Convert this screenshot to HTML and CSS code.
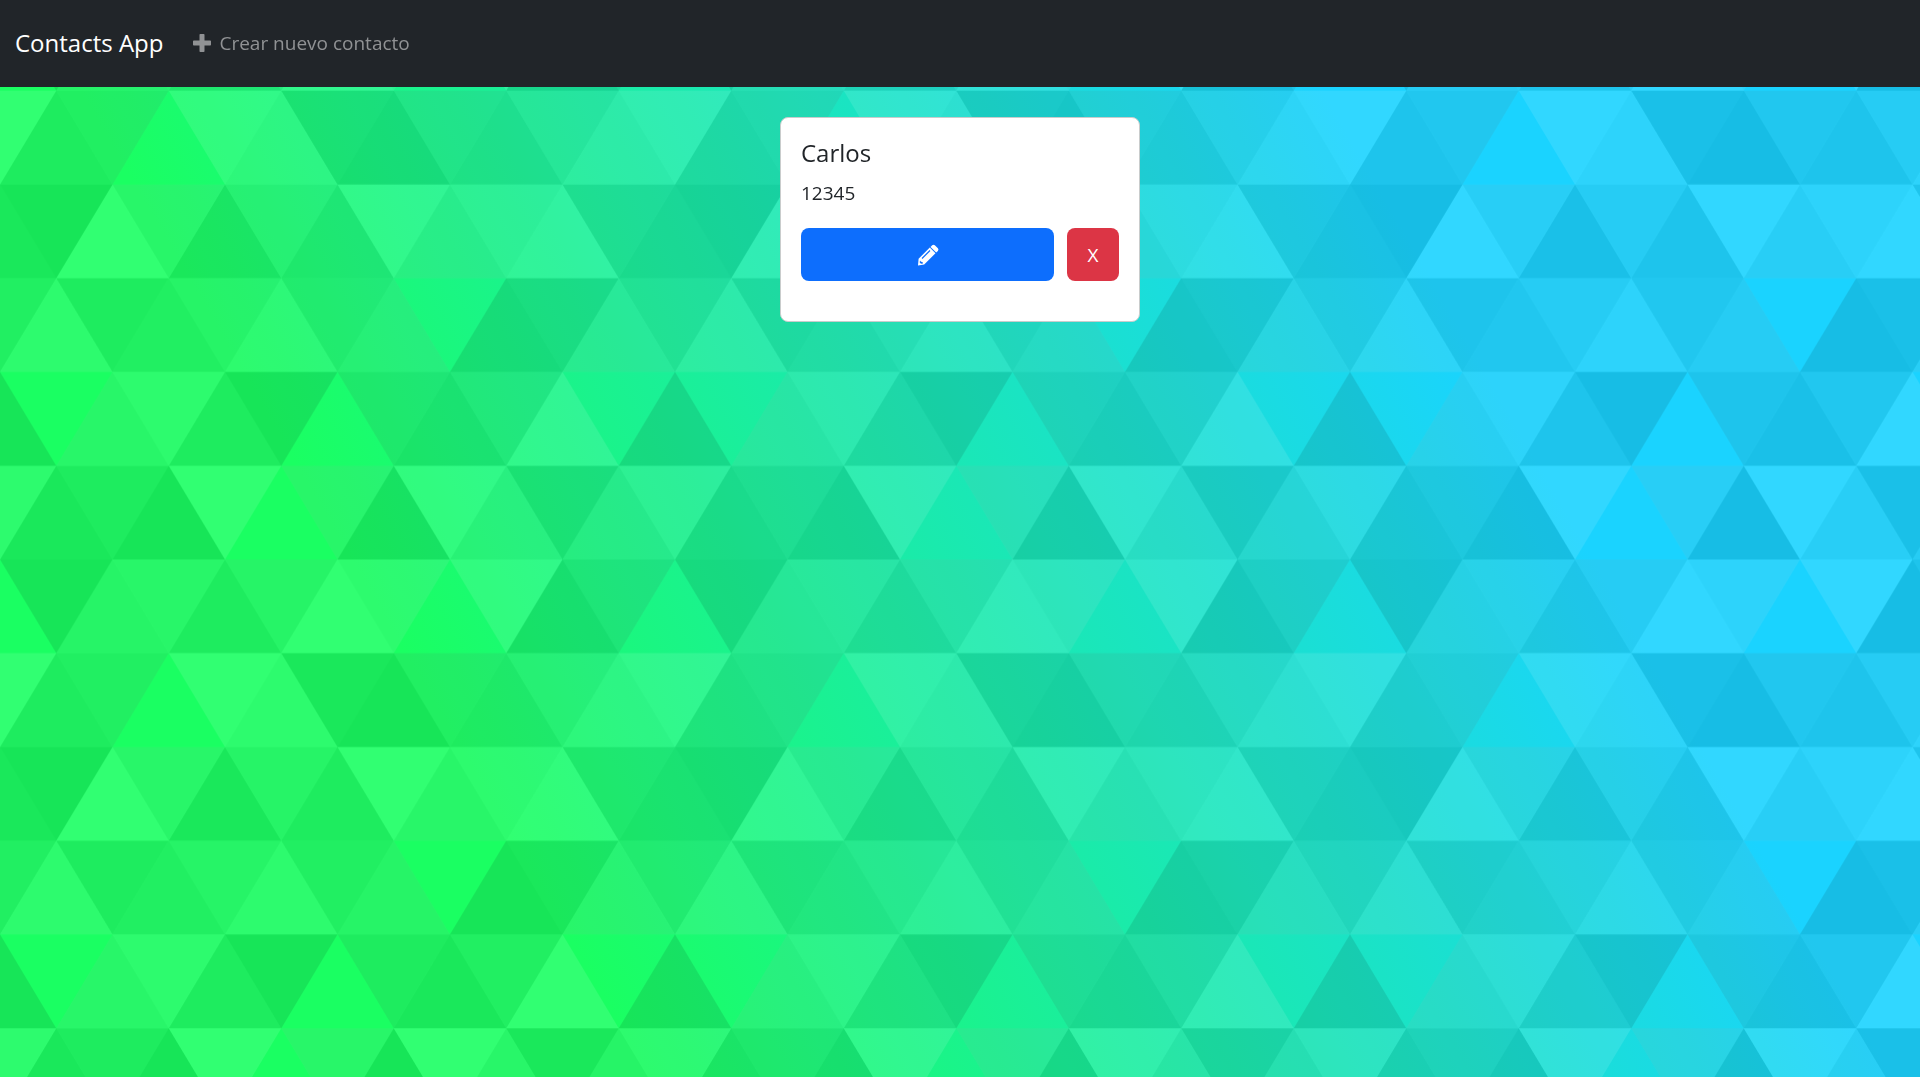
FILE: index.html
```html
<!DOCTYPE html>
<html lang="es">
<head>
<meta charset="utf-8">
<meta name="viewport" content="width=device-width, initial-scale=1">
<title>Contacts App</title>
<link rel="stylesheet" href="styles.css">
</head>
<body>
<svg class="backdrop" aria-hidden="true">
  <defs>
    <pattern id="triangles" width="1080" height="900" patternUnits="userSpaceOnUse" patternTransform="translate(0 -3) scale(.625)">
      <g fill-opacity=".1">
        <polygon fill="#444" points="90 150 0 300 180 300"/><polygon points="90 150 180 0 0 0"/><polygon fill="#AAA" points="270 150 360 0 180 0"/><polygon fill="#DDD" points="450 150 360 300 540 300"/><polygon fill="#999" points="450 150 540 0 360 0"/><polygon points="630 150 540 300 720 300"/><polygon fill="#DDD" points="630 150 720 0 540 0"/><polygon fill="#444" points="810 150 720 300 900 300"/><polygon fill="#FFF" points="810 150 900 0 720 0"/><polygon fill="#DDD" points="990 150 900 300 1080 300"/><polygon fill="#444" points="990 150 1080 0 900 0"/>
        <polygon fill="#DDD" points="90 450 0 600 180 600"/><polygon points="90 450 180 300 0 300"/><polygon fill="#666" points="270 450 180 600 360 600"/><polygon fill="#AAA" points="270 450 360 300 180 300"/><polygon fill="#DDD" points="450 450 360 600 540 600"/><polygon fill="#999" points="450 450 540 300 360 300"/><polygon fill="#999" points="630 450 540 600 720 600"/><polygon fill="#FFF" points="630 450 720 300 540 300"/><polygon points="810 450 720 600 900 600"/><polygon fill="#DDD" points="810 450 900 300 720 300"/><polygon fill="#AAA" points="990 450 900 600 1080 600"/><polygon fill="#444" points="990 450 1080 300 900 300"/>
        <polygon fill="#222" points="90 750 0 900 180 900"/><polygon points="270 750 180 900 360 900"/><polygon fill="#DDD" points="270 750 360 600 180 600"/><polygon points="450 750 540 600 360 600"/><polygon points="630 750 540 900 720 900"/><polygon fill="#444" points="630 750 720 600 540 600"/><polygon fill="#AAA" points="810 750 720 900 900 900"/><polygon fill="#666" points="810 750 900 600 720 600"/><polygon fill="#999" points="990 750 900 900 1080 900"/>
        <polygon fill="#999" points="180 0 90 150 270 150"/><polygon fill="#444" points="360 0 270 150 450 150"/><polygon fill="#FFF" points="540 0 450 150 630 150"/><polygon points="900 0 810 150 990 150"/>
        <polygon fill="#222" points="0 300 -90 450 90 450"/><polygon fill="#FFF" points="0 300 90 150 -90 150"/><polygon fill="#FFF" points="180 300 90 450 270 450"/><polygon fill="#666" points="180 300 270 150 90 150"/><polygon fill="#222" points="360 300 270 450 450 450"/><polygon fill="#FFF" points="360 300 450 150 270 150"/><polygon fill="#444" points="540 300 450 450 630 450"/><polygon fill="#222" points="540 300 630 150 450 150"/><polygon fill="#AAA" points="720 300 630 450 810 450"/><polygon fill="#666" points="720 300 810 150 630 150"/><polygon fill="#FFF" points="900 300 810 450 990 450"/><polygon fill="#999" points="900 300 990 150 810 150"/>
        <polygon points="0 600 -90 750 90 750"/><polygon fill="#666" points="0 600 90 450 -90 450"/><polygon fill="#AAA" points="180 600 90 750 270 750"/><polygon fill="#444" points="180 600 270 450 90 450"/><polygon fill="#444" points="360 600 270 750 450 750"/><polygon fill="#999" points="360 600 450 450 270 450"/><polygon fill="#666" points="540 600 630 450 450 450"/><polygon fill="#222" points="720 600 630 750 810 750"/><polygon fill="#FFF" points="900 600 810 750 990 750"/><polygon fill="#222" points="900 600 990 450 810 450"/>
        <polygon fill="#DDD" points="0 900 90 750 -90 750"/><polygon fill="#444" points="180 900 270 750 90 750"/><polygon fill="#FFF" points="360 900 450 750 270 750"/><polygon fill="#AAA" points="540 900 630 750 450 750"/><polygon fill="#FFF" points="720 900 810 750 630 750"/><polygon fill="#222" points="900 900 990 750 810 750"/>
        <polygon fill="#222" points="1080 300 990 450 1170 450"/><polygon fill="#FFF" points="1080 300 1170 150 990 150"/><polygon points="1080 600 990 750 1170 750"/><polygon fill="#666" points="1080 600 1170 450 990 450"/><polygon fill="#DDD" points="1080 900 1170 750 990 750"/>
      </g>
    </pattern>
  </defs>
  <rect width="100%" height="100%" fill="url(#triangles)"/>
</svg>

<nav class="navbar">
  <a class="navbar-brand" href="#">Contacts App</a>
  <a class="nav-link" href="#nuevo">
    <svg class="icon icon-plus" viewBox="0 0 18 18" aria-hidden="true"><path d="M7.300 0h3.400q.8 0 .8.800v5.700h5.700q.8 0 .8.800v3.400q0 .8-.8.800h-5.700v5.700q0 .8-.8.800H7.300q-.8 0-.8-.8v-5.700H.8q-.8 0-.8-.8V7.300q0-.8.8-.8h5.700V.8q0-.8.8-.8z"/></svg>
    Crear nuevo contacto
  </a>
</nav>

<main class="content">
  <article class="card">
    <h5 class="card-title">Carlos</h5>
    <p class="card-text">12345</p>
    <div class="card-actions">
      <button class="btn btn-primary" type="button" aria-label="Editar">
        <svg class="icon" viewBox="0 0 22 22" aria-hidden="true"><path fill-rule="evenodd" d="M15.200 1.200q1.300-1.100 2.600 0l3.100 3.100q1.100 1.300 0 2.600l-1.700 1.700-5.700-5.700zM12.800 3.600l5.700 5.700L7.200 20.400 1 21.500l.6-6.700zM12.600 6.100l-8 8 .8.800 8-8zM3 16.600l-.3 2 1.300 1.200 2-.4-.5-1.500-1.500-.2z"/></svg>
      </button>
      <button class="btn btn-danger" type="button">X</button>
    </div>
  </article>
</main>
</body>
</html>
```
FILE: styles.css
```css
* { box-sizing: border-box; }

body {
  margin: 0;
  min-height: 100vh;
  color: #212529;
  font-family: "Segoe UI", "Open Sans", "Noto Sans", sans-serif;
  font-size: 19px;
  line-height: 30px;
}

.backdrop {
  position: fixed;
  inset: 0;
  z-index: -1;
  width: 100%;
  height: 100%;
  background: linear-gradient(60deg, #1aff62 calc(50% - 50vh), #1ad3ff calc(50% + 50vh));
}

.navbar {
  display: flex;
  align-items: center;
  gap: 30px;
  min-height: 87px;
  padding: 10px 15px 12px;
  background: #212529;
}

.navbar-brand {
  color: #fff;
  font-size: 24px;
  text-decoration: none;
}

.nav-link {
  display: flex;
  align-items: center;
  gap: 8px;
  color: #909294;
  text-decoration: none;
}

.icon {
  width: 22px;
  height: 22px;
  fill: currentColor;
}

.icon-plus {
  width: 18px;
  height: 18px;
}

.content {
  display: flex;
  justify-content: center;
  padding: 30px 15px;
}

.card {
  width: 360px;
  padding: 20px 20px 40px;
  background: #fff;
  border: 1px solid #c9cccc;
  border-radius: 8px;
}

.card-title {
  margin: 0 0 10px;
  font-size: 24px;
  font-weight: 500;
}

.card-text {
  margin: 0 0 20px;
}

.card-actions {
  display: grid;
  grid-template-columns: 1fr 52px;
  gap: 13px;
}

.btn {
  display: flex;
  align-items: center;
  justify-content: center;
  height: 53px;
  padding: 0;
  color: #fff;
  font: inherit;
  border: 0;
  border-radius: 8px;
}

.btn-primary { background: #0d6efd; }
.btn-danger { background: #dc3545; }
```
